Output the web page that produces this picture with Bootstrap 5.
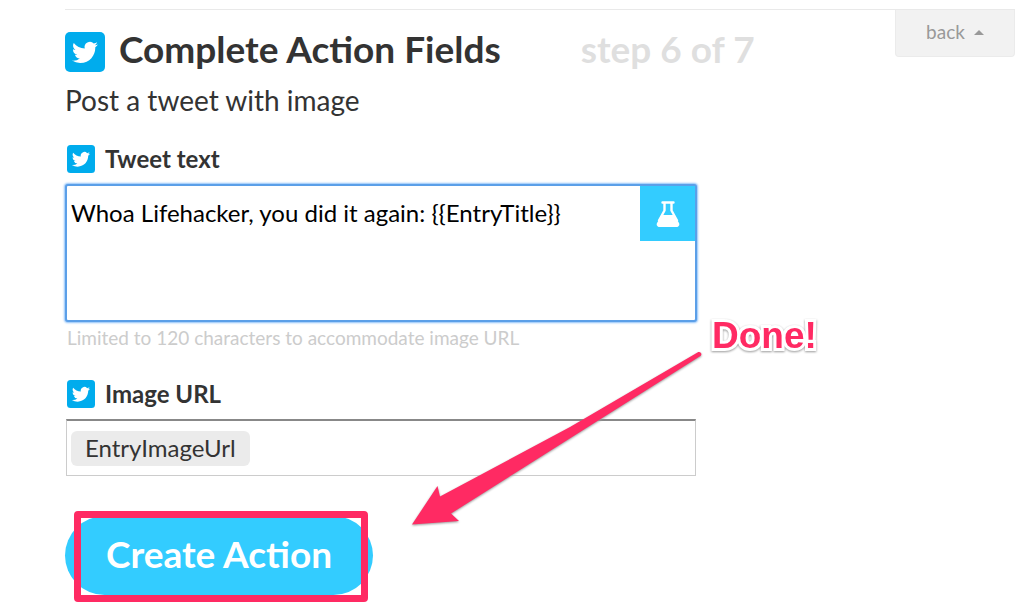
<!DOCTYPE html>
<html lang="en">
<head>
<meta charset="utf-8">
<meta name="viewport" content="width=device-width, initial-scale=1">
<title>Complete Action Fields</title>
<link href="https://cdn.jsdelivr.net/npm/bootstrap@5.3.0/dist/css/bootstrap.min.css" rel="stylesheet">
<style>
body { font-family: Lato, "Liberation Sans", sans-serif; color: #333; background: #fff; overflow-x: hidden; }
.page { padding: 9px 0 12px 65px; }
.top-rule { border-top: 1px solid #e9e9e9; }
.page-title { font-size: 37px; line-height: 34px; font-weight: 700; margin: 22px 0 0; color: #333; }
.step-count { color: #dfdfdf; margin-left: 80px; }
.title-icon { width: 40px; height: 40px; margin-right: 14px; }
.btn-back { width: 120px; height: 47px; padding: 0 0 2px; font-size: 19px; color: #999; background: #f2f2f2; border: 1px solid #ebebeb; border-top: 0; border-radius: 0 0 4px 4px; }
.caret-icon { width: 10px; height: 5px; margin-left: 9px; }
.subtitle { font-size: 28px; line-height: 32px; margin: 12px 0 29px; }
.action-form { max-width: 632px; }
.field-label { font-size: 24px; line-height: 28px; font-weight: 700; padding-left: 2px; margin-bottom: 11px; }
.label-icon { width: 28px; height: 28px; margin-right: 10px; }
.tweet-box { height: 138px; padding: 10px 60px 10px 4px; font-size: 24px; line-height: 34px; color: #000; border: 2px solid #5b9fe8; border-radius: 3px; box-shadow: 0 0 2px 1px #8fc2fa; resize: none; }
.tweet-box:focus { color: #000; border-color: #5b9fe8; box-shadow: 0 0 2px 1px #8fc2fa; }
.btn-flask { top: 2px; right: 2px; width: 55px; height: 55px; padding: 0; border: 0; border-radius: 0; background: #3cf; }
.help-line { font-size: 19px; line-height: 24px; color: #ccc; margin: 4px 0 30px 2px; }
.url-field { height: 57px; padding: 0 4px; margin: 1px 1px 0; border: 1px solid #ccc; border-top: 2px solid #888; }
.token { height: 35px; font-size: 24px; line-height: 34px; padding: 0 14px; border-radius: 6px; background: #ebebeb; }
.url-entry { min-width: 0; font-size: 24px; outline: 0; }
.submit-wrap { margin-top: 40px; }
.btn-create { width: 308px; height: 79px; font-size: 37px; line-height: 40px; font-weight: 700; padding: 0 0 4px; color: #fff; background: #3cf; border: 0; border-radius: 40px; }
.btn-create:hover { color: #fff; background: #3cf; }
.outline-mark { left: 9px; top: -5px; width: 294px; height: 91px; border: 7px solid #ff2a63; border-radius: 4px; pointer-events: none; }
.arrow-mark { left: 345px; bottom: 66px; width: 295px; height: 180px; pointer-events: none; filter: drop-shadow(0 1px 1px #999); }
.done-mark { left: 647px; bottom: 237px; font: 700 37px/44px "Liberation Sans", sans-serif; color: #ff2a63; -webkit-text-stroke: 6px #fff; paint-order: stroke fill; filter: drop-shadow(0 1px 1px #999); }
</style>
</head>
<body>
<svg class="d-none" aria-hidden="true">
  <symbol id="bird" viewBox="0 0 40 40">
    <rect width="40" height="40" rx="5" fill="#00aced"/>
    <path transform="translate(7 7.5) scale(1.08)" fill="#fff" d="M23.953 4.57a10 10 0 01-2.825.775 4.958 4.958 0 002.163-2.723c-.951.555-2.005.959-3.127 1.184a4.92 4.92 0 00-8.384 4.482C7.69 8.095 4.067 6.13 1.64 3.162a4.822 4.822 0 00-.666 2.475c0 1.71.87 3.213 2.188 4.096a4.904 4.904 0 01-2.228-.616v.06a4.923 4.923 0 003.946 4.827 4.996 4.996 0 01-2.212.085 4.936 4.936 0 004.604 3.417 9.867 9.867 0 01-6.102 2.105c-.39 0-.779-.023-1.17-.067a13.995 13.995 0 007.557 2.209c9.053 0 13.998-7.496 13.998-13.985 0-.21 0-.42-.015-.63A9.935 9.935 0 0024 4.59z"/>
  </symbol>
</svg>
<main class="page">
  <header class="top-rule d-flex align-items-start">
    <h1 class="page-title d-flex text-nowrap">
      <svg class="title-icon flex-shrink-0" aria-hidden="true"><use href="#bird"/></svg>
      <span class="title-text">Complete Action Fields</span>
      <span class="step-count">step 6 of 7</span>
    </h1>
    <button type="button" class="btn btn-back ms-auto d-flex align-items-center justify-content-center flex-shrink-0">back
      <svg class="caret-icon" viewBox="0 0 10 5" aria-hidden="true"><path d="M0 5 5 0l5 5z" fill="#999"/></svg>
    </button>
  </header>
  <p class="subtitle">Post a tweet with image</p>

  <form class="action-form position-relative">
    <label for="tweet" class="field-label d-flex"><svg class="label-icon" aria-hidden="true"><use href="#bird"/></svg>Tweet text</label>
    <div class="position-relative">
      <textarea id="tweet" class="form-control tweet-box" spellcheck="false">Whoa Lifehacker, you did it again: {{EntryTitle}}</textarea>
      <button type="button" class="btn btn-flask position-absolute" aria-label="Add ingredient">
        <svg width="24" height="26" viewBox="0 0 24 26" aria-hidden="true">
          <path d="M6.500 1.500h11M8.500 2v7.500L3 19.500M15.500 2v7.500l5.500 10" fill="none" stroke="#fff" stroke-width="2.400" stroke-linecap="round" stroke-linejoin="round"/>
          <path d="M6 14h12l5 8c1 2-.5 4-2.500 4h-17C1.500 26 0 24 1 22z" fill="#fff"/>
        </svg>
      </button>
    </div>
    <p class="help-line">Limited to 120 characters to accommodate image URL</p>

    <label for="image-url" class="field-label d-flex"><svg class="label-icon" aria-hidden="true"><use href="#bird"/></svg>Image URL</label>
    <div class="url-field d-flex align-items-center">
      <span class="token">EntryImageUrl</span>
      <input id="image-url" type="text" class="url-entry flex-grow-1 border-0">
    </div>

    <div class="submit-wrap position-relative">
      <button type="submit" class="btn btn-create">Create Action</button>
      <div class="outline-mark position-absolute"></div>
    </div>

    <svg class="arrow-mark position-absolute" viewBox="0 0 295 180" aria-hidden="true">
      <path d="M287.500 3.500c3-1.700 5.500 1.800 2.500 3.800L41 164.500l8 7.500L2 175.500 27.500 137l2.500 10.500L160 78z" fill="#ff2a63"/>
    </svg>
    <div class="done-mark position-absolute">Done!</div>
  </form>
</main>
<script src="https://cdn.jsdelivr.net/npm/bootstrap@5.3.0/dist/js/bootstrap.bundle.min.js"></script>
</body>
</html>
